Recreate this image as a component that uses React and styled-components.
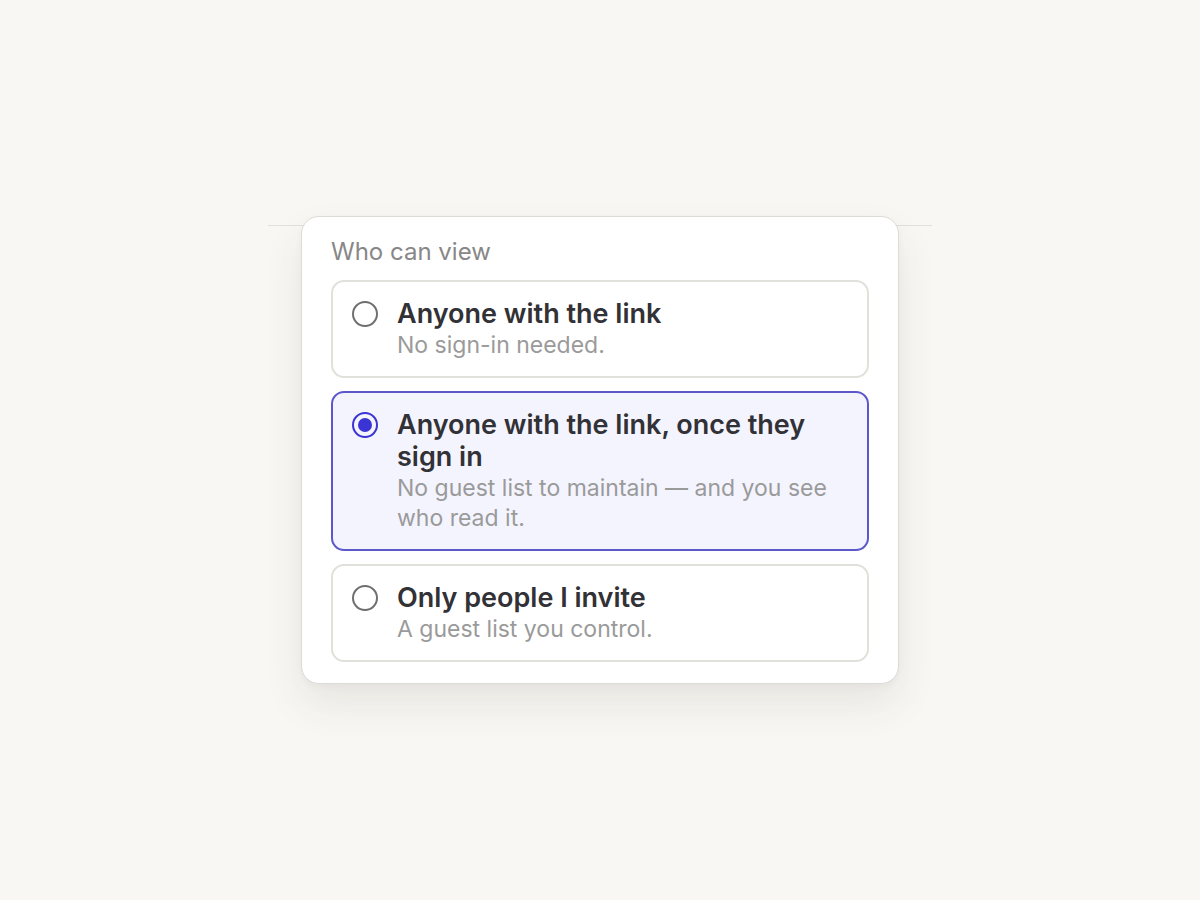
import React, { useState } from "react";
import styled, { createGlobalStyle } from "styled-components";

const GlobalStyle = createGlobalStyle`
  html, body {
    margin: 0;
    padding: 0;
    background: #f8f7f4;
  }
  body {
    font-family: Inter, "Noto Sans", sans-serif;
    -webkit-font-smoothing: antialiased;
  }
`;

const Page = styled.div`
  min-height: 100vh;
  display: flex;
  justify-content: center;
  align-items: center;
`;

const Stage = styled.div`
  position: relative;
  width: 664px;
  display: flex;
  justify-content: center;

  &::before {
    content: "";
    position: absolute;
    top: 9px;
    left: 0;
    right: 0;
    height: 1px;
    background: #e3e1dc;
  }
`;

const Card = styled.div`
  position: relative;
  width: 598px;
  box-sizing: border-box;
  background: #fff;
  border: 1.5px solid #dddbd5;
  border-radius: 18px;
  padding: 19px 29px 21px;
  display: flex;
  flex-direction: column;
  gap: 12px;
  box-shadow: 0 20px 40px rgba(60, 50, 30, 0.09), 0 3px 8px rgba(0, 0, 0, 0.03);
`;

const Label = styled.div`
  font-size: 24px;
  line-height: 32px;
  color: #878787;
`;

const Options = styled.div`
  display: flex;
  flex-direction: column;
  gap: 13px;
`;

const Option = styled.label`
  display: flex;
  align-items: flex-start;
  gap: 19px;
  padding: 16px 20px 16px 19px;
  border-radius: 13px;
  border: 2px solid ${(p) => (p.$active ? "#5d58c9" : "#e2e0da")};
  background: ${(p) => (p.$active ? "#f4f4fe" : "#fff")};
  cursor: pointer;
`;

const Radio = styled.span`
  flex: none;
  width: 26px;
  height: 26px;
  margin-top: 3px;
  box-sizing: border-box;
  border-radius: 50%;
  border: 2px solid ${(p) => (p.$active ? "#3a34d4" : "#6f6f6f")};
  display: flex;
  align-items: center;
  justify-content: center;

  &::after {
    content: "";
    width: 14px;
    height: 14px;
    border-radius: 50%;
    background: #3a34d4;
    display: ${(p) => (p.$active ? "block" : "none")};
  }
`;

const Text = styled.div`
  display: flex;
  flex-direction: column;
`;

const Title = styled.div`
  font-size: 27px;
  line-height: 32px;
  font-weight: 600;
  color: #313136;
`;

const Desc = styled.div`
  font-size: 23px;
  line-height: 30px;
  color: #9a9a9a;
`;

const options = [
  { id: "link", title: "Anyone with the link", desc: "No sign-in needed." },
  {
    id: "signin",
    title: "Anyone with the link, once they sign in",
    desc: "No guest list to maintain — and you see who read it.",
  },
  { id: "invite", title: "Only people I invite", desc: "A guest list you control." },
];

export default function App() {
  const [selected, setSelected] = useState("signin");

  return (
    <>
      <GlobalStyle />
      <Page>
        <Stage>
          <Card>
            <Label>Who can view</Label>
            <Options>
              {options.map((o) => (
                <Option
                  key={o.id}
                  $active={selected === o.id}
                  onClick={() => setSelected(o.id)}
                >
                  <Radio $active={selected === o.id} />
                  <Text>
                    <Title>{o.title}</Title>
                    <Desc>{o.desc}</Desc>
                  </Text>
                </Option>
              ))}
            </Options>
          </Card>
        </Stage>
      </Page>
    </>
  );
}
